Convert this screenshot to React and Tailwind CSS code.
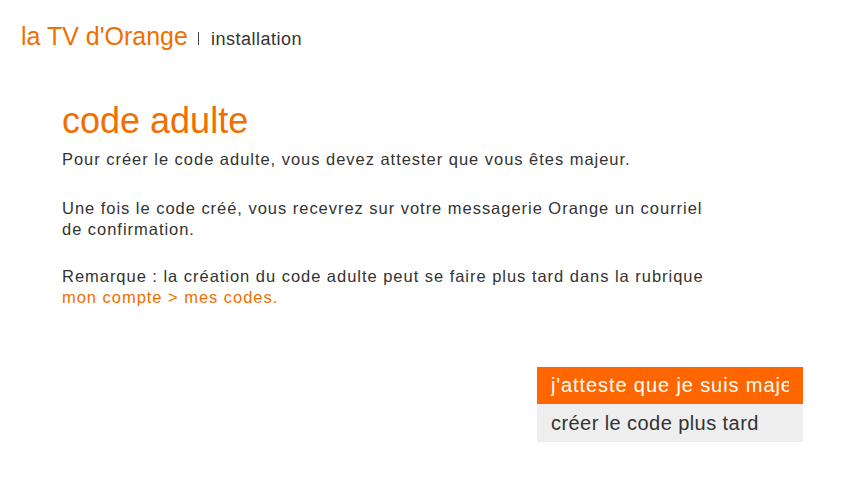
export default function App() {
    return (
        <div
            className="w-[852px] h-[500px] bg-white relative overflow-hidden text-[#333333]"
            style={{ fontFamily: '"Liberation Sans", Arial, sans-serif' }}
        >
            {/* en-tête */}
            <div className="flex items-baseline pl-[21px] pt-[21px]">
                <span className="text-[25px] leading-[30px] text-[#f16e00]">la TV d'Orange</span>
                <span className="ml-[10px] mr-[12px] w-[1px] h-[13px] bg-[#444444] self-center mt-[3px]" />
                <span className="text-[18px] tracking-[0.5px] text-[#333333]">installation</span>
            </div>

            <div className="pl-[62px] pt-[48px]">
                <h1 className="text-[36px] leading-[40px] text-[#f16e00]">code adulte</h1>
                <div className="mt-[8px] text-[16.5px] tracking-[0.97px] leading-[21.5px] w-[740px]">
                    <p>Pour créer le code adulte, vous devez attester que vous êtes majeur.</p>
                    <p className="mt-[27px]">
                        Une fois le code créé, vous recevrez sur votre messagerie Orange un courriel
                        <br />
                        de confirmation.
                    </p>
                    <p className="mt-[25px]">
                        Remarque : la création du code adulte peut se faire plus tard dans la rubrique
                        <br />
                        <span className="text-[#f16e00]">mon compte &gt; mes codes.</span>
                    </p>
                </div>
            </div>

            {/* boutons */}
            <div className="flex justify-end pr-[49px] mt-[58px]">
                <div className="w-[266px] flex flex-col">
                    <div className="h-[37px] bg-[#ff6600] text-white text-[20px] tracking-[0.9px] pl-[14px] pr-[14px] flex items-center">
                        <span className="block overflow-hidden whitespace-nowrap">j'atteste que je suis majeur</span>
                    </div>
                    <div className="h-[38px] bg-[#eeeeee] text-[#333333] text-[20px] tracking-[0.43px] pl-[14px] flex items-center whitespace-nowrap">
                        créer le code plus tard
                    </div>
                </div>
            </div>
        </div>
    );
}
